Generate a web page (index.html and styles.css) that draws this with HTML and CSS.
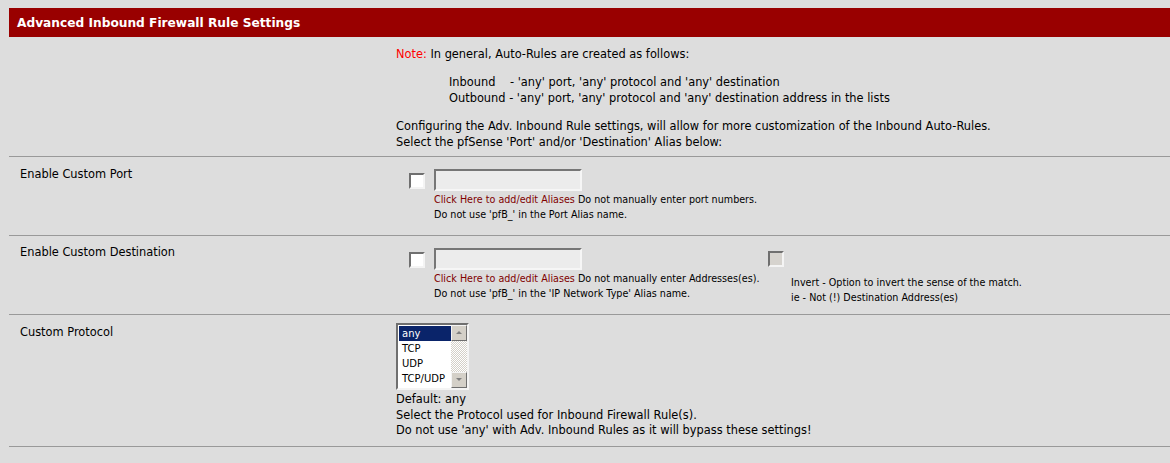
FILE: index.html
```html
<!DOCTYPE html>
<html lang="en">
<head>
    <meta charset="UTF-8">
    <title>Advanced Inbound Firewall Rule Settings</title>
    <link rel="stylesheet" href="styles.css">
</head>
<body>
    <div class="panel">
        <div class="panel-head">Advanced Inbound Firewall Rule Settings</div>

        <div class="row row-note">
            <div class="label"></div>
            <div class="field note">
                <p><span class="red">Note:</span> In general, Auto-Rules are created as follows:</p>
                <p class="indent">Inbound&nbsp;&nbsp;&nbsp; - 'any' port, 'any' protocol and 'any' destination<br>
                Outbound - 'any' port, 'any' protocol and 'any' destination address in the lists</p>
                <p>Configuring the Adv. Inbound Rule settings, will allow for more customization of the Inbound Auto-Rules.<br>
                Select the pfSense 'Port' and/or 'Destination' Alias below:</p>
            </div>
        </div>

        <div class="row row-alias">
            <div class="label">Enable Custom Port</div>
            <div class="field">
                <div class="alias">
                    <span class="check"></span>
                    <div class="alias-body">
                        <span class="textbox"></span>
                        <div class="help">
                            <a href="#">Click Here to add/edit Aliases</a> Do not manually enter port numbers.<br>
                            Do not use 'pfB_' in the Port Alias name.
                        </div>
                    </div>
                </div>
            </div>
        </div>

        <div class="row row-alias row-dest">
            <div class="label">Enable Custom Destination</div>
            <div class="field dest">
                <div class="alias">
                    <span class="check"></span>
                    <div class="alias-body">
                        <span class="textbox"></span>
                        <div class="help">
                            <a href="#">Click Here to add/edit Aliases</a> Do not manually enter Addresses(es).<br>
                            Do not use 'pfB_' in the 'IP Network Type' Alias name.
                        </div>
                    </div>
                </div>
                <div class="invert">
                    <span class="check disabled"></span>
                    <div class="help">
                        Invert - Option to invert the sense of the match.<br>
                        ie - Not (!) Destination Address(es)
                    </div>
                </div>
            </div>
        </div>

        <div class="row row-proto">
            <div class="label">Custom Protocol</div>
            <div class="field">
                <div class="listbox">
                    <ul class="options">
                        <li class="selected">any</li>
                        <li>TCP</li>
                        <li>UDP</li>
                        <li>TCP/UDP</li>
                    </ul>
                    <div class="scrollbar">
                        <span class="arrow up"></span>
                        <span class="track"></span>
                        <span class="arrow down"></span>
                    </div>
                </div>
                <p class="proto-help">Default: any<br>
                Select the Protocol used for Inbound Firewall Rule(s).<br>
                Do not use 'any' with Adv. Inbound Rules as it will bypass these settings!</p>
            </div>
        </div>
    </div>
</body>
</html>
```

FILE: styles.css
```css
body {
    margin: 0;
    padding: 8px 0 0 9px;
    background: #dddddd;
    font-family: "DejaVu Sans", Verdana, sans-serif;
    font-size: 11.4px;
    color: #000;
}
p {
    margin: 0;
}
.panel-head {
    background: #990000;
    color: #fff;
    font-weight: bold;
    font-size: 12.2px;
    height: 29px;
    line-height: 30px;
    padding-left: 8px;
}
.row {
    display: grid;
    grid-template-columns: 387px 1fr;
    border-bottom: 1px solid #999;
}
.label {
    padding-left: 11px;
    line-height: 16px;
}
.field {
    line-height: 16px;
}
.red {
    color: #ff0000;
}

/* note row */
.row-note {
    padding: 9px 0 6px;
}
.note p + p {
    margin-top: 12px;
}
.note .indent {
    padding-left: 53px;
}

/* alias rows */
.row-alias {
    padding: 12px 0 13px;
}
.row-alias .label {
    margin-top: -3px;
}
.row-dest {
    padding-bottom: 9px;
}
.row-dest .label {
    margin-top: -4px;
}
.alias {
    display: flex;
    gap: 9px;
    padding-left: 13px;
    width: 359px;
    flex-shrink: 0;
}
.check {
    display: block;
    flex-shrink: 0;
    width: 12px;
    height: 12px;
    margin-top: 4px;
    background: #fff;
    border: 2px solid;
    border-color: #6f6f6f #f4f4f4 #f4f4f4 #6f6f6f;
}
.textbox {
    display: block;
    width: 144px;
    height: 18px;
    background: #ececec;
    border: 2px solid;
    border-color: #767676 #f6f6f6 #f6f6f6 #767676;
}
.help {
    font-size: 9.6px;
    line-height: 15px;
    padding-top: 1px;
    white-space: nowrap;
}
.help a {
    color: #800000;
    text-decoration: none;
}
.dest {
    display: flex;
}
.invert {
    display: flex;
    flex-direction: column;
    margin-top: 3px;
}
.check.disabled {
    background: #d6d3ce;
    margin-top: 0;
}
.invert .help {
    margin-top: 7px;
    padding-left: 23px;
}

/* protocol row */
.row-proto {
    padding: 8px 0 7px;
}
.row-proto .label {
    padding-top: 1px;
}
.listbox {
    display: flex;
    width: 69px;
    height: 63px;
    background: #fff;
    border: 2px solid;
    border-color: #6f6f6f #f4f4f4 #f4f4f4 #6f6f6f;
}
.options {
    list-style: none;
    margin: 0;
    padding: 1px 0 0 1px;
    flex: 1;
    font-size: 10px;
    line-height: 15px;
}
.options li {
    padding-left: 3px;
}
.options .selected {
    background: #0a246a;
    color: #fff;
}
.scrollbar {
    width: 16px;
    display: flex;
    flex-direction: column;
}
.track {
    flex: 1;
    background-image: repeating-conic-gradient(#d4d0c8 0 25%, #ffffff 0 50%);
    background-size: 2px 2px;
}
.arrow {
    height: 14px;
    background: #d4d0c8;
    border: 1px solid;
    border-color: #f4f4f4 #6f6f6f #6f6f6f #f4f4f4;
    position: relative;
}
.arrow::after {
    content: "";
    position: absolute;
    left: 4px;
    border-left: 3px solid transparent;
    border-right: 3px solid transparent;
}
.arrow.up::after {
    top: 5px;
    border-bottom: 3px solid #808080;
}
.arrow.down::after {
    top: 5px;
    border-top: 3px solid #808080;
}
.proto-help {
    margin-top: 2px;
    line-height: 15.5px;
}
```
